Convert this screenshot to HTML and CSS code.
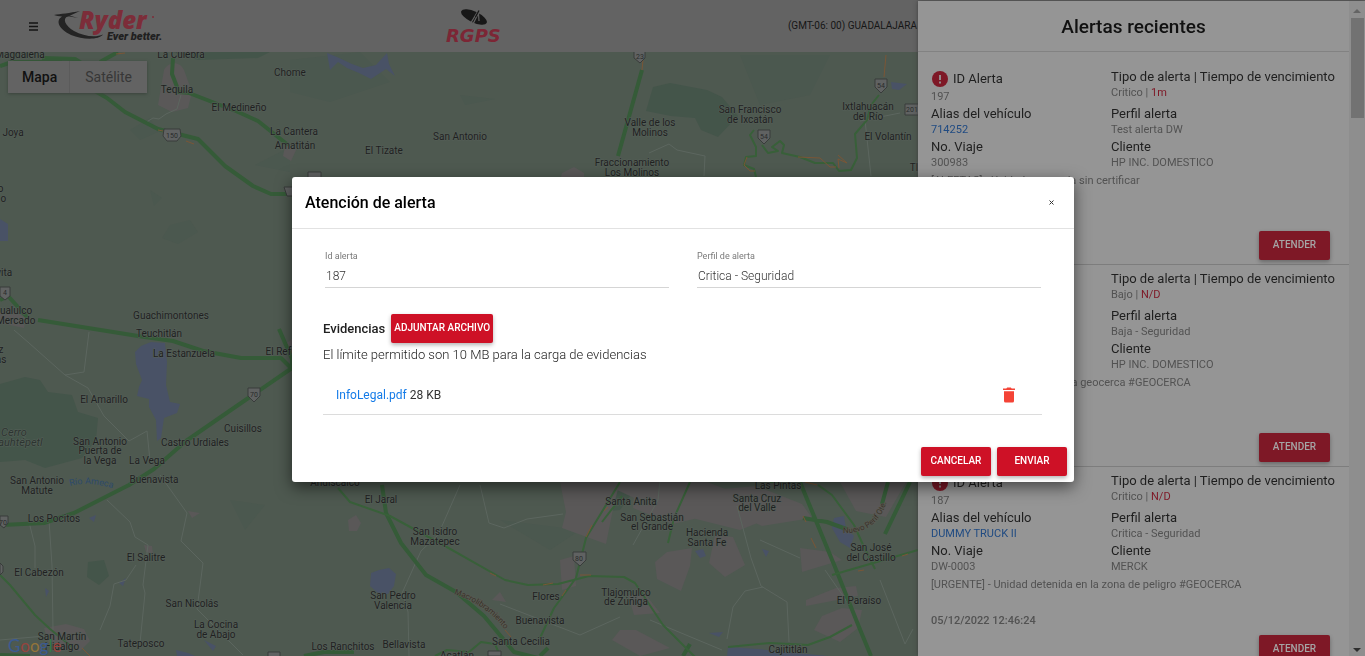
FILE: index.html
```html
<!DOCTYPE html>
<html lang="es">
<head>
<meta charset="utf-8">
<meta name="viewport" content="width=device-width, initial-scale=1">
<title>RGPS - Atención de alerta</title>
<link rel="stylesheet" href="styles.css">
</head>
<body>
<div class="app">
  <header class="topbar">
    <button class="menu-button" type="button" aria-label="Menú">
      <svg width="9" height="9" viewBox="0 0 9 9"><path d="M0 1h9M0 4.500h9M0 8h9" stroke="#151515" stroke-width="1.300"/></svg>
    </button>
    <svg class="logo-ryder" width="118" height="34" viewBox="0 0 118 34" role="img" aria-label="Ryder Ever better">
      <path d="M0 6C6 5 16 4 26 2L14 7.500C8 9 11 17 20 22C29 27 41 29 49 25.500C45 31 29 31 17 26C5 20 1 12 8 7.500C5 7 2 7 0 6Z" fill="#242424"/>
      <path d="M12 5.500L24 9L13 7Z" fill="#242424"/>
      <text class="ryder-name" x="25" y="20">Ryder</text>
      <circle cx="99" cy="8" r="1" fill="#7c2d39"/>
      <text class="ryder-slogan" x="53" y="31">Ever better.</text>
    </svg>
    <svg class="logo-rgps" width="60" height="36" viewBox="0 0 60 36" role="img" aria-label="RGPS">
      <g transform="rotate(25 29 9)"><ellipse cx="29" cy="9" rx="14" ry="5.500" fill="#171717"/></g>
      <path d="M25.500 15.500L33 3M28 16L33.500 5L34 13" fill="none" stroke="#636363" stroke-width="1.200"/>
      <path d="M30.500 9L34 2.500" stroke="#171717" stroke-width="1.300"/>
      <text class="rgps-name" x="1" y="34">RGPS</text>
    </svg>
    <span class="timezone">(GMT-06: 00) GUADALAJARA</span>
  </header>

  <main class="map">
    <svg class="map-canvas" viewBox="0 52 1365 604" preserveAspectRatio="xMinYMin slice" role="img" aria-label="Mapa">
      <rect y="52" width="1365" height="604" fill="#4e5950"/>
      <g class="relief">
        <path d="M130 130l20-12 8 14-18 8zM290 60l70-8 30 30-60 20-40-10zM460 95l35 4-30 6zM150 190l12 8-8 8zM170 225l20-5 8 12-20 12-16-6zM740 55l90 0-20 40-50 10zM255 165l35-18v25zM500 520l80 10-30 20zM230 500l35 5-20 25z"/>
      </g>
      <g class="forest">
        <path d="M653 87L670 83L707 90L722 97L738 116L718 137L701 130L695 118L671 116L646 111Z"/>
        <path d="M0 384L25 377L40 380L48 392L72 395L78 412L98 418L96 440L82 458L45 468L25 460L0 462Z"/>
        <path d="M88 562l16-2 5 16-10 9-12-8z"/>
        <path d="M172 52l98 0-12 6-60 2zM560 482l80 0-20 28-46 4z"/>
      </g>
      <g class="water">
        <path d="M327 53L337 57L352 64L363 68L376 65L387 53L389 64L395 76L386 69L371 79L359 73L347 68L338 62L330 70Z"/>
        <path d="M0 219l8 5v17H0z"/>
        <path d="M141 346L151 342L165 343L167 362L166 385L170 402L180 404L177 413L164 418L161 438L157 441L156 420L149 407L149 399L137 396L139 387L142 380L136 364L135 352Z"/>
        <path d="M371 573l8-3 10-2 7 6-2 12-6 8h-9l-9-8zM89 518l7-3-2 7zM119 583l7-5-3 8zM45 588l4 3-3 6zM891 82l16 2-8 6-7-1zM693 497l5-2-1 9-5 2zM683 512l15 3v3l-12-2zM695 551l8-2 3 7-6 2zM762 549l7 2-3 6zM834 518l10-2 2 12 8 8-4 12-10-6-8-14zM728 647l30 2 70 7H727zM709 633l14-1-4 5zM176 650l12 3 7 3h-18zM204 640l12 6-3 5z"/>
      </g>
      <g class="urban">
        <path d="M164 70C168 62 179 60 184 70L192 92L188 108L172 112L158 105Z"/>
        <path d="M285 146l12 2-6 13-8-5zM284 345l8-6v16zM0 312l12-2 14 8-2 10-24-5zM44 628l22-4 18 5 6 12-10 10-30-3zM560 482l60 0-6 22-8 40-44-16 4-16zM348 520l8-5 5 8-4 8h-8zM562 173l12-6 10 6v8h-24zM144 545l8 1 1 8-7-2zM188 511l12 2-8 5zM612 640l8-10 16 0 34 18-30 8zM655 562l12-10 25-4-2 18-9 25-24-12zM715 535l18 2 12 28-20 12-16-14zM712 490l44-4 46 18 10 14-50 8-48-22zM800 548l30 4 12 8-40 12zM806 600l30-12 20-2 2 10-52 10zM822 616l20-8 20 2-4 18-18 14-26-12zM635 482l72 0 26 10-10 20-50 12-40-16zM840 482l66 0-20 35-30-6zM492 600l8-8 6 10zM560 560l14-4 2 30-14 4zM600 482l100 0 60 40-20 8-80-20zM628 595l18 0 14 18-26 2z"/>
      </g>
      <g class="minor-road">
        <path d="M145 123l8-5 6 1 7-5 11-5 4-14M14 330l15 13 36 32 19-3 5-40M65 375l23 13 16 28 25 25 18-10 3 30M29 522l6 24 0 22M49 520l3 46 1 64M107 500l23 22 5 15 13 8-5 40 2 8-5 50M136 565l-10 15-12 4-4 22-10 24M160 475l27 38-6 28 22 22-6 46 20 20 26 26M460 485l-22 50-17 16-18 40-4 10M403 594l5 18 1 44M480 485l9 38 15 5 23-9 36-5M500 604l80 31 40-18M737 506l14 52 10 28 26 16 2 40M763 587l-18 4-12 16-6 32M650 620l72 30M880 580l25 64 8-15M704 176l1-20-28-6-8-6-20 9M865 120l6 56M860 121l40-8M0 640l45-4M660 480l-2 20-25 45M760 540l40 18M825 570l25 36"/>
      </g>
      <g class="main-road">
        <path d="M0 66l12-4 48 0 23 22 24 14 18 14 33 17 40 10 27 27 28 20 18 8h24M42 58l33 1 32 20M100 62l18-10M173 58l-1 16 7 18 10 1 31 12 16 6 22 10 30 24M0 300l8-4 20 22M38 320l100 16 35 5 30 10 38 7h40l11 11v-10l-13-30M292 368l-64 44-42 29-32 28-25 16-55 28-30 10-42 2M382 485l4 28 15 30 25 32 30 17 28 24 30 36 40 10 30 18M0 655l30 1M304 656l20-4h30M642 70l-24 86M800 482l35 85 24 60 12 29M803 518l24 4 22 8M888 482l-6 22M910 482l-25 52M540 656l8-8M683 656l7-12"/>
      </g>
      <g class="thin-road">
        <path d="M338 488l12 14 40 14 55 30 60 34 23 5 30-1 31-8 35 1 11 6 8 12 20 30 34 34M435 656l12-6 22 2 12-10 14 2 5 12M620 482l-34 56-10 40-22 30-14 30M622 496l-20 26M690 482l-16 36-6 25M818 485l14 10 22 30 10 22 11 22M832 575l86-25M728 647l42-4 38 2 22-8 22-12M770 482l10 0"/>
        <path d="M0 575l10 10 25 30 15 14 22 18"/>
        <path d="M754 130l-4 5 6 12 0 9-10 1-2 8 10 4 2 8M762 145l6 8 10-2-6-4 8-6 4 4-2 8 18 4 15 6 18 0 6 8 12-1 6-12-2-24 12-14 4-15 8-10"/>
      </g>
      <g class="traffic">
        <path d="M116 54l9-1M158 130l5 1M186 141l8 3M642 70l1-10M886 55l-2 22M747 157l-3 8 6 6 5 0M798 157l22 1 10 9 6 0M838 155l9 8-9-4 1 9M490 573l6 3M543 585l10-2M580 575l11 0M566 590l-4 6M505 630l6 7M592 525l-6 12M604 511l4-4M805 482l12 3M811 538l5 10M858 571l6-1M902 556l6-2M803 516l3 6M82 648l8 8"/>
      </g>
      <g class="shield">
        <path d="M164 129h16l1 7-4 5h-10l-4-5zM634 51h11v7l-5 5-6-5zM875 79h12v8l-6 6-6-6zM758 130h12v8l-6 6-6-6zM905 104h16v11h-16zM0 287h10v9l-5 4-5-4zM248 388h12v8l-6 6-6-6zM573 552h13v8l-6 6-7-6zM0 516h8v7l-4 5-4-3zM0 563l3 3v6l-3 3zM284 187h12v9h-9zM308 172h13v6h-13zM268 652h12v5h-12zM488 651h13v5h-13z"/>
      </g>
      <g class="shield-number">
        <text x="172" y="138">150</text><text x="640" y="59">23</text><text x="881" y="88">54</text><text x="764" y="139">54</text><text x="912" y="112">201</text><text x="5" y="295">4</text><text x="254" y="397">70</text><text x="579" y="561">80</text><text x="3" y="525">70</text>
      </g>
      <g class="place">
        <text x="20" y="58">Magdalena</text>
        <text x="181" y="58">La Culebra</text>
        <text x="177" y="93">Tequila</text>
        <text x="290" y="76">Chome</text>
        <text x="239" y="111">El Medineño</text>
        <text x="294" y="135">La Cantera</text>
        <text x="295" y="149">Amatitán</text>
        <text x="13" y="136">Joya</text>
        <text x="384" y="154">El Tizate</text>
        <text x="460" y="140">San Antonio</text>
        <text x="650" y="126">Valle de los</text><text x="650" y="136">Molinos</text>
        <text x="632" y="166">Fraccionamiento</text><text x="632" y="176">Los Molinos</text>
        <text x="750" y="113">San Francisco</text><text x="750" y="123">de Ixcatán</text>
        <text x="868" y="110">Ixtlahuacán</text><text x="868" y="120">del Río</text>
        <text x="888" y="140">El Volantín</text><text x="914" y="171">Tl</text>
        <text x="-8" y="192">Hoyo</text><text x="-14" y="202">Colorado</text>
        <text x="1" y="276">Avita</text>
        <text x="10" y="314">Ahualulco</text><text x="9" y="324">de Mercado</text>
        <text x="-10" y="353">Lopez</text><text x="-6" y="363">Rojas</text>
        <text x="171" y="319">Guachimontones</text>
        <text x="159" y="337">Teuchitlán</text>
        <text x="184" y="357">La Estanzuela</text>
        <text x="288" y="355">El Refugio</text>
        <text x="104" y="403">El Amarillo</text>
        <text x="243" y="432">Cuisillos</text>
        <text x="100" y="445">San Antonio</text><text x="100" y="454">Puerta de</text><text x="100" y="464">la Vega</text>
        <text x="147" y="464">La Vega</text>
        <text x="195" y="446">Castro Urdiales</text>
        <text x="154" y="483">Buenavista</text>
        <text x="37" y="484">San Antonio</text><text x="37" y="494">Matute</text>
        <text x="54" y="522">Los Pocitos</text>
        <text x="146" y="561">El Salitre</text>
        <text x="39" y="576">El Cabezón</text>
        <text x="192" y="607">San Nicolás</text>
        <text x="216" y="628">La Cocina</text><text x="216" y="638">de Abajo</text>
        <text x="62" y="640">San Martín</text><text x="62" y="650">Hidalgo</text>
        <text x="141" y="647">Tateposco</text>
        <text x="335" y="486">Andiscalco</text>
        <text x="381" y="503">El Jaral</text>
        <text x="435" y="535">San Isidro</text><text x="435" y="545">Mazatepec</text>
        <text x="393" y="599">San Pedro</text><text x="393" y="609">Valencia</text>
        <text x="343" y="650">Los Ranchitos</text>
        <text x="404" y="648">Bellavista</text>
        <text x="457" y="659">Acatlán</text>
        <text x="546" y="600">Flores</text>
        <text x="540" y="624">Buenavista</text>
        <text x="521" y="645">Santa Cecilia</text>
        <text x="626" y="596">Tlajomulco</text><text x="626" y="605">de Zúñiga</text>
        <text x="631" y="505">Santa Anita</text>
        <text x="652" y="521">San Sebastián</text><text x="652" y="530">el Grande</text>
        <text x="707" y="536">Hacienda</text><text x="707" y="546">Santa Fe</text>
        <text x="778" y="489">Las Pintas</text>
        <text x="757" y="502">Santa Cruz</text><text x="757" y="511">del Valle</text>
        <text x="871" y="551">San José</text><text x="871" y="561">del Castillo</text>
        <text x="859" y="604">El Paraíso</text>
        <text x="788" y="653">Cajititlán</text>
      </g>
      <g class="natural">
        <text x="14" y="436">Cerro</text><text x="14" y="446">Cuauhtépetl</text>
      </g>
      <path id="river" d="M70 486Q88 481 112 488" fill="none"/>
      <path id="macro" d="M454 594Q490 606 508 634" fill="none"/>
      <path id="perif" d="M843 533Q880 534 888 496" fill="none"/>
      <text class="river-name"><textPath href="#river">Río Ameca</textPath></text>
      <text class="road-name"><textPath href="#macro">Macrolibramiento</textPath></text>
      <text class="road-name"><textPath href="#perif">Nuevo Perif Ote.</textPath></text>
      <text class="google" x="8" y="652"><tspan fill="#3a5a92">G</tspan><tspan fill="#96443d">o</tspan><tspan fill="#94743a">o</tspan><tspan fill="#3a5a92">g</tspan><tspan fill="#357a45">l</tspan><tspan fill="#96443d">e</tspan></text>
    </svg>
    <div class="map-types">
      <button class="map-type map-type-active" type="button">Mapa</button>
      <button class="map-type" type="button">Satélite</button>
    </div>
  </main>
</div>

<aside class="drawer">
  <div class="drawer-content">
    <h2 class="drawer-title">Alertas recientes</h2>
    <article class="alert">
      <div class="alert-grid">
        <div><div class="alert-id"><svg width="16" height="16" viewBox="0 0 16 16"><circle cx="8" cy="8" r="8" fill="#7e1826"/><path d="M8 4v5M8 10.500v2" stroke="#969696" stroke-width="1.800"/></svg>ID Alerta</div><div class="value">197</div></div>
        <div><div class="label">Tipo de alerta | Tiempo de vencimiento</div><div class="value">Critico | <span class="due">1m</span></div></div>
        <div><div class="label">Alias del vehículo</div><a class="value vehicle" href="#714252">714252</a></div>
        <div><div class="label">Perfil alerta</div><div class="value">Test alerta DW</div></div>
        <div><div class="label">No. Viaje</div><div class="value">300983</div></div>
        <div><div class="label">Cliente</div><div class="value">HP INC. DOMESTICO</div></div>
      </div>
      <p class="value description">[ALERTAS] - Unidad en parada sin certificar</p>
      <p class="value date">05/12/2022 12:58:10</p>
      <button class="button attend" type="button">ATENDER</button>
    </article>
    <article class="alert">
      <div class="alert-grid">
        <div><div class="alert-id"><svg width="16" height="16" viewBox="0 0 16 16"><circle cx="8" cy="8" r="8" fill="#7e1826"/><path d="M8 4v5M8 10.500v2" stroke="#969696" stroke-width="1.800"/></svg>ID Alerta</div><div class="value">190</div></div>
        <div><div class="label">Tipo de alerta | Tiempo de vencimiento</div><div class="value">Bajo | <span class="due">N/D</span></div></div>
        <div><div class="label">Alias del vehículo</div><a class="value vehicle" href="#714253">714253</a></div>
        <div><div class="label">Perfil alerta</div><div class="value">Baja - Seguridad</div></div>
        <div><div class="label">No. Viaje</div><div class="value">300984</div></div>
        <div><div class="label">Cliente</div><div class="value">HP INC. DOMESTICO</div></div>
      </div>
      <p class="value description">[AVISOS] - Unidad dentro de la geocerca #GEOCERCA</p>
      <p class="value date">05/12/2022 12:50:02</p>
      <button class="button attend" type="button">ATENDER</button>
    </article>
    <article class="alert">
      <div class="alert-grid">
        <div><div class="alert-id"><svg width="16" height="16" viewBox="0 0 16 16"><circle cx="8" cy="8" r="8" fill="#7e1826"/><path d="M8 4v5M8 10.500v2" stroke="#969696" stroke-width="1.800"/></svg>ID Alerta</div><div class="value">187</div></div>
        <div><div class="label">Tipo de alerta | Tiempo de vencimiento</div><div class="value">Critico | <span class="due">N/D</span></div></div>
        <div><div class="label">Alias del vehículo</div><a class="value vehicle" href="#dummy-truck-ii">DUMMY TRUCK II</a></div>
        <div><div class="label">Perfil alerta</div><div class="value">Critica - Seguridad</div></div>
        <div><div class="label">No. Viaje</div><div class="value">DW-0003</div></div>
        <div><div class="label">Cliente</div><div class="value">MERCK</div></div>
      </div>
      <p class="value description">[URGENTE] - Unidad detenida en la zona de peligro #GEOCERCA</p>
      <p class="value date">05/12/2022 12:46:24</p>
      <button class="button attend" type="button">ATENDER</button>
    </article>
  </div>
  <div class="scrollbar" aria-hidden="true">
    <svg width="8" height="4" viewBox="0 0 8 4"><path d="M0 4L4 0L8 4Z" fill="#646464"/></svg>
    <div class="scroll-thumb"></div>
    <svg class="scroll-down" width="8" height="4" viewBox="0 0 8 4"><path d="M0 0L4 4L8 0Z" fill="#2e2e2e"/></svg>
  </div>
</aside>

<div class="overlay">
  <form class="modal" role="dialog" aria-modal="true" aria-labelledby="modal-title">
    <header class="modal-header">
      <h1 class="modal-title" id="modal-title">Atención de alerta</h1>
      <button class="close" type="button" aria-label="Cerrar"><svg width="5" height="5" viewBox="0 0 5 5"><path d="M.5.5l4 4M4.500.5l-4 4" stroke="#333" stroke-width="1"/></svg></button>
    </header>
    <div class="modal-body">
      <div class="fields">
        <div class="field"><label for="alert-id">Id alerta</label><input id="alert-id" type="text" value="187" readonly></div>
        <div class="field"><label for="alert-profile">Perfil de alerta</label><input id="alert-profile" type="text" value="Critica - Seguridad" readonly></div>
      </div>
      <section class="evidence">
        <div class="evidence-head"><h2 class="evidence-title">Evidencias</h2><button class="button attach" type="button">ADJUNTAR ARCHIVO</button></div>
        <p class="limit">El límite permitido son 10 MB para la carga de evidencias</p>
        <div class="file">
          <span><a class="file-link" href="#InfoLegal.pdf">InfoLegal.pdf</a> 28 KB</span>
          <button class="delete" type="button" aria-label="Eliminar"><svg width="12" height="16" viewBox="0 0 12 16"><path d="M0 1.500h3.300L4.200.5h3.600l.9 1H12V3H0zM1 4.300h10V14q0 1.500-1.500 1.500h-7Q1 15.500 1 14z" fill="#f44336"/></svg></button>
        </div>
      </section>
    </div>
    <footer class="modal-footer">
      <button class="button action" type="button">CANCELAR</button>
      <button class="button action" type="submit">ENVIAR</button>
    </footer>
  </form>
</div>
</body>
</html>
```
FILE: styles.css
```css
* { box-sizing: border-box; }
html, body { height: 100%; }
body {
  margin: 0;
  overflow: hidden;
  background: #636363;
  color: #212121;
  font-family: Roboto, "Liberation Sans", sans-serif;
  font-size: 13px;
  line-height: 16px;
}
h1, h2, p { margin: 0; }
a { text-decoration: none; }
svg { display: block; flex: none; }
button { padding: 0; border: 0; background: none; font-family: inherit; cursor: pointer; }

.app { display: flex; flex-direction: column; height: 100%; }
.topbar {
  display: grid;
  grid-template-columns: 21px 19fr auto 20fr;
  column-gap: 4px;
  align-items: center;
  flex: none;
  height: 52px;
  padding: 0 448px 0 29px;
  background: #636363;
}
.timezone { justify-self: end; color: #161616; font-size: 10px; white-space: nowrap; }
.ryder-name { fill: #7c2d39; font: italic 800 24px "Open Sans", sans-serif; }
.ryder-slogan { fill: #202020; font: italic 900 11px Roboto, sans-serif; }
.rgps-name { fill: #7c2635; font: italic bold 18px "DejaVu Sans", sans-serif; }

.map { position: relative; flex: 1; min-height: 0; overflow: hidden; background: #4e5950; }
.map-canvas { width: 100%; height: 100%; }
.relief { fill: #4b584f; }
.forest { fill: #44554a; }
.water { fill: #495266; }
.urban { fill: #5a5858; }
.minor-road { fill: none; stroke: #5c665f; stroke-width: 1; }
.main-road { fill: none; stroke: #355b38; stroke-width: 4; stroke-linejoin: round; }
.thin-road { fill: none; stroke: #386039; stroke-width: 2; stroke-linejoin: round; }
.traffic { fill: none; stroke: #7a5636; stroke-width: 1; }
.shield { fill: #606262; stroke: #393c3b; }
.shield-number { fill: #292c2b; font-size: 7px; text-anchor: middle; }
.place, .natural { fill: #1f2121; stroke: #566059; stroke-width: 1px; paint-order: stroke; font-size: 10px; text-anchor: middle; }
.natural { fill: #2c3430; font-size: 11px; font-style: italic; }
.river-name { fill: #2d4a6b; font-size: 9px; }
.road-name { fill: #38322a; stroke: #5b5b53; paint-order: stroke; font-size: 8px; }
.google { font: 17px Lato, sans-serif; }
.map-types { position: absolute; top: 9px; left: 8px; display: flex; height: 32px; background: #636363; box-shadow: 0 1px 3px #3a433c; }
.map-type { padding: 0 15px; color: #373737; font-size: 14px; }
.map-type-active { padding: 0 12px 0 14px; border-right: 1px solid #5b5b5b; color: #111; font-weight: 500; }

.drawer {
  position: fixed;
  top: 1px;
  right: 0;
  bottom: 0;
  display: flex;
  width: 447px;
  background: #959595;
  box-shadow: 0 0 4px #3d3d3d;
}
.drawer-content { flex: 1; min-width: 0; overflow: hidden; }
.drawer-title { height: 51px; margin-bottom: 11px; border-bottom: 1px solid #828282; color: #111; font-size: 19px; font-weight: 500; line-height: 51px; text-align: center; }
.alert { display: flex; flex-direction: column; padding: 6px 19px 4px 13px; border-bottom: 1px solid #7d7d7d; color: #1f1f1f; white-space: nowrap; }
.alert-grid { display: grid; grid-template-columns: 180px 1fr; row-gap: 1px; margin-right: -12px; }
.alert-id { display: flex; align-items: center; gap: 5px; height: 20px; padding-left: 1px; }
.value { display: block; color: #525252; font-size: 11px; }
.vehicle { color: #204b82; }
.due { color: #7e1826; }
.description { margin-top: 2px; }
.date { margin-top: 20px; font-weight: 500; }
.button { height: 29px; padding: 0 0 2px; border-radius: 2px; background: #ce1126; box-shadow: 0 2px 4px rgba(0, 0, 0, .3); color: #fff; font-size: 10px; font-weight: 500; }
.attend { align-self: flex-end; width: 71px; margin-top: 6px; background: #7e1826; color: #a5a5a5; }
.scrollbar { display: flex; flex-direction: column; align-items: center; gap: 5px; width: 16px; padding: 8px 0 4px; background: #8e8e8e; }
.scroll-thumb { width: 13px; height: 100px; background: #727272; }
.scroll-down { margin-top: auto; }

.overlay { position: fixed; inset: 0; display: flex; align-items: center; justify-content: center; padding: 3px 0 0 1px; }
.modal { width: 782px; max-width: 100%; border-radius: 3px; background: #fff; box-shadow: 0 5px 16px rgba(0, 0, 0, .55); }
.modal-header { display: flex; align-items: center; justify-content: space-between; height: 52px; padding: 0 13px; border-bottom: 1px solid #e2e2e2; }
.modal-title { color: #000; font-size: 16px; font-weight: 500; }
.close { display: grid; place-items: center; width: 20px; height: 20px; }
.modal-body { padding: 19px 32px 0 31px; }
.fields { display: grid; grid-template-columns: 1fr 1fr; gap: 28px; padding: 0 1px 0 2px; }
.field { display: flex; flex-direction: column; }
.field label { color: #7a7a7a; font-size: 9px; }
.field input { width: 100%; height: 24px; padding: 0 1px; border: 0; border-bottom: 1px solid #d5d5d5; background: none; color: #333; font: 300 12px/16px Roboto, sans-serif; outline: none; }
.evidence { margin-top: 26px; }
.evidence-head { display: flex; align-items: center; gap: 6px; }
.evidence-title { font-size: 13px; font-weight: 500; }
.attach { padding: 0 3px 2px; }
.limit { margin-top: 4px; color: #222; font-weight: 300; }
.file { display: flex; align-items: center; justify-content: space-between; height: 40px; padding: 0 27px 0 13px; margin-top: 12px; border-bottom: 1px solid #dcdcdc; color: #333; font-size: 12px; }
.file-link { color: #147be8; }
.modal-footer { display: flex; justify-content: flex-end; gap: 6px; padding: 32px 7px 6px; }
.action { width: 70px; }
```
